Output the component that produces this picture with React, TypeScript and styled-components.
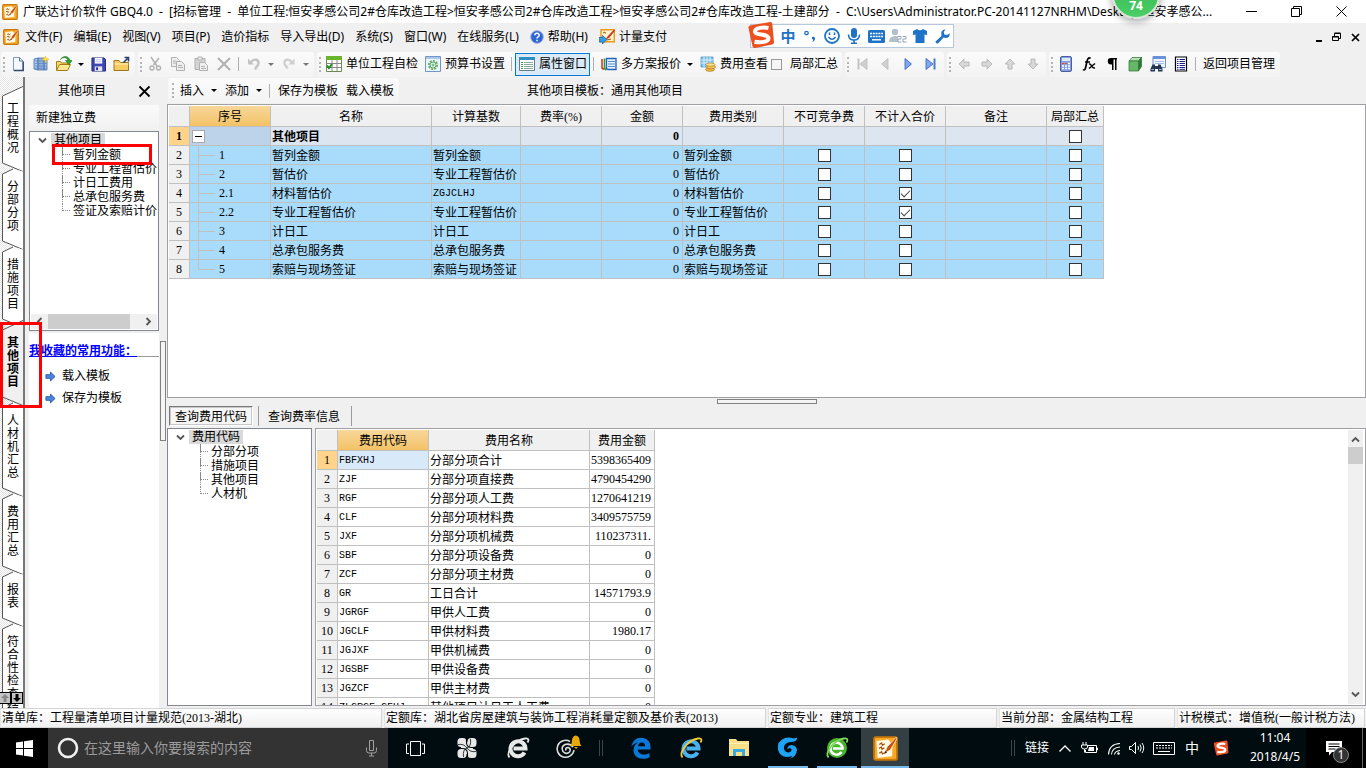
import React from "react";
import styled, { createGlobalStyle, css } from "styled-components";

const GlobalStyle = createGlobalStyle`
  *, *::before, *::after { box-sizing: border-box; }
  html, body { margin: 0; padding: 0; }
  body {
    font-family: "Noto Sans", "Noto Sans CJK SC", sans-serif;
    font-size: 12px;
    line-height: 16px;
    color: #000;
    background: #f0f0f0;
  }
  button, input { font: inherit; color: inherit; margin: 0; }
  button { border: 0; background: none; padding: 0; white-space: nowrap; }
  svg { display: block; flex: none; }
`;

const serif = `"Liberation Serif", "Noto Sans CJK SC", serif`;

const Screen = styled.div`
  position: relative;
  height: 100vh;
  display: flex;
  flex-direction: column;
  overflow: hidden;
  background: #f0f0f0;
`;

/* ---------- title and menu ---------- */
const TitleBar = styled.header`
  height: 23px;
  flex: none;
  display: flex;
  align-items: center;
  padding-left: 2px;
  background: #fff;
`;
const TitleText = styled.h1`
  margin: 0 0 0 5px;
  font-size: 12px;
  font-weight: 400;
  line-height: 22px;
  flex: 0 1 1206px;
  min-width: 0;
  overflow: hidden;
  text-overflow: ellipsis;
  white-space: pre;
`;
const TitleDash = styled.span`
  padding: 0 3px;
`;
const WindowButtons = styled.div`
  display: flex;
  margin-left: auto;
  padding-right: 2px;
`;
const WindowButton = styled.button`
  width: 45px;
  height: 22px;
  display: grid;
  place-items: center;
`;
const MenuBar = styled.nav`
  height: 28px;
  flex: none;
  display: flex;
  align-items: center;
  gap: 1px;
  padding-left: 3px;
`;
const MenuItem = styled.button`
  display: flex;
  align-items: center;
  gap: 4px;
  padding: 0 5px;
  height: 24px;
`;
const MdiButtons = styled.div`
  display: flex;
  margin-left: auto;
  padding-right: 2px;
`;
const MdiButton = styled.button`
  width: 18px;
  height: 20px;
  display: grid;
  place-items: center;
`;
const ImeBar = styled.div`
  position: absolute;
  top: 24px;
  left: 750px;
  height: 24px;
  width: 204px;
  display: flex;
  align-items: center;
  padding-left: 26px;
  background: #fff;
  border: 1px solid #b4c7dc;
`;
const ImeLogo = styled.span`
  position: absolute;
  left: -4px;
  top: -4px;
`;
const ImeButton = styled.button`
  width: 22px;
  height: 22px;
  display: grid;
  place-items: center;
  color: #1e73c8;
  font-size: 15px;
  font-weight: 700;
  line-height: 20px;
`;
const FloatBadge = styled.div`
  position: absolute;
  top: -29px;
  left: 1112px;
  width: 48px;
  height: 48px;
  border-radius: 50%;
  border: 2px solid #d8e4d8;
  background: linear-gradient(#2fae4c, #4bcf66);
  box-shadow: 0 2px 8px rgba(0, 0, 0, 0.4);
  color: #fff;
  font: 700 12px/16px "Open Sans", sans-serif;
  display: flex;
  align-items: flex-end;
  justify-content: center;
  padding-bottom: 3px;
`;

/* ---------- toolbars ---------- */
const ToolRow = styled.div`
  height: 26px;
  flex: none;
  display: flex;
  align-items: center;
  gap: 3px;
  padding-left: 1px;
`;
const ToolGroup = styled.div`
  height: 25px;
  display: flex;
  align-items: center;
  padding-right: 2px;
  border-radius: 3px;
  background: linear-gradient(#fbfbfb, #f3f3f3);
`;
const Grip = styled.span`
  width: 5px;
  height: 15px;
  border-left: 2px dotted #b4b4b4;
  margin-left: 2px;
  margin-right: -2px;
`;
const ToolButton = styled.button`
  width: 23px;
  height: 23px;
  display: grid;
  place-items: center;
`;
const TextTool = styled.button<{ $active?: boolean }>`
  height: 23px;
  display: flex;
  align-items: center;
  gap: 4px;
  padding: 0 3px 0 4px;
  ${(p) =>
    p.$active &&
    css`
      background: #dbeaf7;
      box-shadow: inset 0 0 0 1px #0078d7;
    `}
`;
const Drop = styled.button<{ $dim?: boolean }>`
  width: 12px;
  height: 22px;
  display: grid;
  place-items: center;
  &::before {
    content: "";
    border: 3px solid transparent;
    border-top-color: ${(p) => (p.$dim ? "#777" : "#000")};
    border-bottom: 0;
  }
`;
const Divider = styled.span`
  width: 1px;
  height: 14px;
  margin: 0 3px;
  background: #b0b0b0;
`;
const CheckLabel = styled.label`
  display: flex;
  align-items: center;
  gap: 8px;
  padding-right: 2px;
`;
const Tick = styled.input<{ $soft?: boolean }>`
  appearance: none;
  display: block;
  width: ${(p) => (p.$soft ? 11 : 13)}px;
  height: ${(p) => (p.$soft ? 11 : 13)}px;
  border: 1px solid ${(p) => (p.$soft ? "#999" : "#333")};
  background: ${(p) => (p.$soft ? "#f6f6f6" : "#fff")};
  &:checked::after {
    content: "";
    display: block;
    width: 9px;
    height: 5px;
    margin: 2px 1px;
    border: solid #444;
    border-width: 0 0 1px 1px;
    transform: rotate(-45deg);
  }
`;

/* ---------- workspace ---------- */
const Workspace = styled.div`
  position: relative;
  flex: 1;
  min-height: 0;
  display: flex;
`;
const SideTabs = styled.nav`
  width: 25px;
  flex: none;
  position: relative;
  overflow: hidden;
  padding-top: 19px;
  border-right: 2px solid #777;
  background: repeating-conic-gradient(#e4e4e4 0 25%, #fff 0 50%) 0 0 / 2px 2px;
`;
const SideTab = styled.button<{ $on?: boolean }>`
  position: relative;
  z-index: ${(p) => (p.$on ? 2 : 1)};
  display: block;
  width: 25px;
  padding: 6px 5px 20px 7px;
  line-height: 13px;
  white-space: normal;
  word-break: break-all;
  text-align: left;
  font-weight: ${(p) => (p.$on ? 700 : 400)};
  & > svg { position: absolute; left: 0; top: -11px; z-index: -1; }
`;
const TabScroll = styled.div`
  position: absolute;
  z-index: 3;
  left: -1px;
  bottom: 4px;
  display: flex;
`;
const TabScrollButton = styled.button`
  width: 12px;
  height: 12px;
  display: grid;
  place-items: center;
  border: 1px solid #000;
  background: #c4c4c4;
`;
const SidePanel = styled.aside`
  width: 130px;
  flex: none;
  margin-left: 4px;
  display: flex;
  flex-direction: column;
`;
const PanelTitle = styled.div`
  height: 28px;
  display: flex;
  align-items: center;
  justify-content: space-between;
  padding: 0 8px 0 29px;
`;
const PanelTool = styled.button`
  height: 24px;
  margin-bottom: 2px;
  padding: 1px 7px 0;
  text-align: left;
  border-radius: 2px;
  background: linear-gradient(#fafafa, #f2f2f2);
`;
const TreeBox = styled.div`
  display: flex;
  flex-direction: column;
  border: 1px solid #828790;
  background: #fff;
  overflow: hidden;
`;
const SideTree = styled(TreeBox)`
  height: 200px;
  padding: 1px;
`;
const BottomTree = styled(TreeBox)`
  width: 145px;
  flex: none;
  padding: 1px;
`;
const TreeRoot = styled.div`
  height: 14px;
  display: flex;
  align-items: center;
  gap: 4px;
  padding-left: 7px;
  line-height: 14px;
`;
const RootName = styled.span`
  padding: 0 3px;
  background: #d9d9d9;
`;
const TreeList = styled.ul`
  margin: 0 0 0 31px;
  padding: 0;
  list-style: none;
`;
const TreeItem = styled.li`
  height: 14px;
  line-height: 16px;
  display: flex;
  white-space: nowrap;
  &::before {
    content: "";
    flex: none;
    width: 8px;
    height: 8px;
    margin-right: 3px;
    border-left: 1px dotted #888;
    border-bottom: 1px dotted #888;
  }
  &:not(:last-child) {
    background: repeating-linear-gradient(#888 0 1px, transparent 1px 2px) 0 0 / 1px 14px no-repeat;
  }
`;
const HScroll = styled.div`
  height: 15px;
  margin-top: auto;
  display: flex;
  align-items: center;
  justify-content: space-between;
  padding: 0 4px;
  background: #f0f0f0;
`;
const HThumb = styled.div`
  width: 82px;
  height: 15px;
  margin-right: 10px;
  background: #cdcdcd;
`;
const Favorites = styled.section`
  flex: 1;
  margin-top: 2px;
  background: #fff;
`;
const FavTitle = styled.h2`
  margin: 0 0 8px;
  padding-top: 10px;
  height: 24px;
  font-size: 12px;
  line-height: 16px;
  font-weight: 700;
  color: #0000ff;
  white-space: nowrap;
  text-decoration: underline;
  border-bottom: 1px solid #999;
`;
const FavLink = styled.a`
  height: 22px;
  display: flex;
  align-items: center;
  gap: 6px;
  padding-left: 16px;
  color: #000;
  text-decoration: none;
`;
const VSplit = styled.div`
  width: 8px;
  flex: none;
  padding: 264px 1px 0;
  &::before {
    content: "";
    display: block;
    height: 100px;
    width: 6px;
    border: 1px solid #808080;
    background: #f4f4f4;
  }
`;
const Main = styled.main`
  flex: 1;
  min-width: 0;
  display: flex;
  flex-direction: column;
`;
const MainTools = styled.div`
  height: 27px;
  flex: none;
  display: flex;
  align-items: center;
  padding-left: 1px;
`;
const EditGroup = styled(ToolGroup)`
  gap: 1px;
  padding-left: 2px;
`;
const TemplateName = styled.span`
  margin-left: 128px;
`;
const SheetBox = styled.div`
  border: 1px solid #a0a0a4;
  background: #fff;
  padding: 1px;
  overflow: hidden;
  display: flex;
`;
const TopSheet = styled(SheetBox)`
  flex: 0 0 294px;
`;
const HSplit = styled.div`
  height: 6px;
  flex: none;
  display: flex;
  justify-content: center;
  padding: 1px 0 0;
  &::before {
    content: "";
    width: 100px;
    height: 5px;
    border: 1px solid #808080;
    background: #f4f4f4;
  }
`;
const QueryTabs = styled.div`
  height: 24px;
  flex: none;
  display: flex;
  align-items: center;
  padding-left: 2px;
`;
const QueryTab = styled.button<{ $on?: boolean }>`
  height: 20px;
  padding: 1px 5px 0;
  border: 1px solid transparent;
  ${(p) =>
    p.$on &&
    css`
      border-color: #777 #fff #fff #777;
      box-shadow: inset -1px -1px 0 #c8c8c8, inset 1px 1px 0 #c8c8c8;
      background: #f6f6f6;
    `}
`;
const QueryDivider = styled.span`
  width: 1px;
  height: 20px;
  margin: 0 3px 0 5px;
  background: #999;
`;
const BottomArea = styled.div`
  flex: 1;
  min-height: 0;
  display: flex;
  gap: 3px;
  padding-bottom: 2px;
`;
const CodeSheet = styled(SheetBox)`
  flex: 1;
  min-width: 0;
  justify-content: space-between;
`;
const VScroll = styled.div`
  width: 15px;
  margin-right: 1px;
  display: flex;
  flex-direction: column;
  align-items: center;
  padding: 5px 0;
  background: #f0f0f0;
`;
const VThumb = styled.div`
  width: 15px;
  height: 17px;
  margin-top: 3px;
  margin-bottom: auto;
  background: #cdcdcd;
`;

/* ---------- grids ---------- */
const Grid = styled.table`
  table-layout: fixed;
  border-collapse: separate;
  border-spacing: 0;
  align-self: flex-start;
  flex: none;
  font-family: ${serif};
`;
const Col = styled.col<{ $w: number }>`
  width: ${(p) => p.$w}px;
`;
const Head = styled.th<{ $hot?: boolean }>`
  height: 21px;
  padding: 2px 0 0;
  font-weight: 400;
  line-height: 18px;
  border: solid #c0c0c0;
  border-width: 0 1px 1px 0;
  white-space: nowrap;
  background: ${(p) => (p.$hot ? "linear-gradient(#f8d79b, #f3c266)" : "#f0f0f0")};
`;
const RowNo = styled.th<{ $hot?: boolean; $bold?: boolean }>`
  height: 19px;
  padding: 0;
  font-weight: ${(p) => (p.$bold ? 700 : 400)};
  line-height: 16px;
  border: solid #c0c0c0;
  border-width: 0 1px 1px 0;
  background: ${(p) => (p.$hot ? "#ffd48a" : "#f0f0f0")};
`;
const Cell = styled.td<{ $bg?: string; $bold?: boolean }>`
  height: 19px;
  padding: 2px 0 0 1px;
  line-height: 16px;
  white-space: nowrap;
  overflow: hidden;
  border: solid #c0c0c0;
  border-width: 0 1px 1px 0;
  background: ${(p) => p.$bg || "#fff"};
  font-weight: ${(p) => (p.$bold ? 700 : 400)};
`;
const NumberCell = styled(Cell)`
  padding: 0 3px 0 0;
  text-align: right;
`;
const TickCell = styled(Cell)`
  padding: 0;
  & > input { margin: 0 auto; }
`;
const SerialCell = styled(Cell)`
  padding: 0;
`;
const Serial = styled.div`
  height: 18px;
  display: flex;
  align-items: center;
`;
const Branch = styled.span<{ $last?: boolean }>`
  width: 17px;
  height: 18px;
  margin-left: 8px;
  margin-right: 4px;
  background:
    linear-gradient(#c0c0c0, #c0c0c0) 0 0 / 1px ${(p) => (p.$last ? "9px" : "18px")} no-repeat,
    linear-gradient(#c0c0c0, #c0c0c0) 0 9px / 17px 1px no-repeat;
`;
const Code = styled.span`
  display: block;
  font-family: "Liberation Mono", monospace;
  font-size: 10px;
  line-height: 16px;
`;
const Fold = styled.button`
  width: 13px;
  height: 13px;
  margin-left: 2px;
  display: grid;
  place-items: center;
  border: 1px solid #aaa;
  background: #fff;
  &::before {
    content: "";
    width: 7px;
    height: 1px;
    background: #000;
  }
`;

/* ---------- status bar ---------- */
const StatusBar = styled.footer`
  height: 20px;
  flex: none;
  display: grid;
  grid-template-columns: 382fr 382fr 229fr 176fr 188fr;
  gap: 2px;
  padding-right: 1px;
  font-family: ${serif};
`;
const StatusCell = styled.div`
  border: 1px solid #d4d4d4;
  border-left-color: #e4e4e4;
  background: linear-gradient(#fff, #f0f0f0);
  padding-left: 1px;
  line-height: 18px;
  white-space: nowrap;
  overflow: hidden;
`;

/* ---------- task bar ---------- */
const TaskBar = styled.div`
  height: 40px;
  flex: none;
  display: flex;
  background: #000c10;
  color: #fff;
`;
const StartButton = styled.button`
  width: 48px;
  display: grid;
  place-items: center;
  background: #000;
`;
const SearchBox = styled.label`
  width: 340px;
  display: flex;
  align-items: center;
  gap: 5px;
  padding: 0 9px;
  background: #333;
`;
const SearchInput = styled.input`
  flex: 1;
  min-width: 0;
  padding: 0;
  border: 0;
  background: none;
  font-size: 14px;
  line-height: 20px;
  color: #9b9b9b;
  &::placeholder { color: #9b9b9b; opacity: 1; }
`;
const Task = styled.button<{ $w: number; $run?: boolean; $on?: boolean }>`
  width: ${(p) => p.$w}px;
  display: grid;
  place-items: center;
  background-color: ${(p) => (p.$on ? "#333f43" : "transparent")};
  ${(p) =>
    p.$run &&
    css`
      background-image: linear-gradient(#76b9ed, #76b9ed);
      background-repeat: no-repeat;
      background-position: center bottom;
      background-size: ${p.$on ? "100%" : "40px"} 2px;
    `}
`;
const TrayBars = styled.span`
  width: 4px;
  height: 16px;
  align-self: center;
  border: solid #3c4648;
  border-width: 0 1px;
`;
const PinnedBars = styled(TrayBars)`
  margin: 0 13px 0 6px;
`;
const Tray = styled.div`
  margin-left: auto;
  display: flex;
  align-items: center;
`;
const TrayItem = styled.button<{ $w: number }>`
  width: ${(p) => p.$w}px;
  height: 40px;
  display: grid;
  place-items: center;
`;
const ImeMode = styled(TrayItem)`
  font-size: 14px;
`;
const Clock = styled.time`
  width: 62px;
  margin-left: 11px;
  text-align: center;
  line-height: 19px;
`;
const Notice = styled.button`
  position: relative;
  width: 56px;
  height: 40px;
  display: grid;
  place-items: center;
  background: #000;
`;
const NoticeCount = styled.span`
  position: absolute;
  left: 27px;
  top: 19px;
  width: 16px;
  height: 16px;
  border-radius: 50%;
  border: 1px solid #888;
  background: #333;
  line-height: 14px;
`;
const ShowDesktop = styled.button`
  width: 4px;
  height: 40px;
  background: #000;
  border-left: 1px solid #666;
`;

/* ---------- outlines drawn over the window ---------- */
const TreeMark = styled.div`
  position: absolute;
  left: 52px;
  top: 67px;
  width: 100px;
  height: 21px;
  border: 3px solid #f00;
`;
const TabMark = styled.div`
  position: absolute;
  z-index: 4;
  left: 0;
  top: 245px;
  width: 42px;
  height: 86px;
  border: 3px solid #f00;
`;

/* ---------- icons ---------- */
const AppIcon = ({ s = 16 }: { s?: number }) => (
  <svg width={s} height={s} viewBox="0 0 16 16">
    <rect x="0.7" y="0.7" width="14.6" height="14.6" rx="1" fill="#f9a825" stroke="#c8780a" strokeWidth="1.2" />
    <path d="M2.200 3.200l7.500-1 2.800 3.300-.3 7.500-9.200 1z" fill="#fffbe8" />
    <path d="M4 5.500l1.500-1 .5 1.500 1.500-1M3.800 8l1.500-1 .5 1.500 1.500-1M4 11l1.500-1 .5 1.500 2-1" stroke="#a5520c" strokeWidth=".8" fill="none" />
    <path d="M14.800.8L9 7l-1.500 3.800L11 9l4.300-7.200z" fill="#c4501a" stroke="#fff0c0" strokeWidth=".5" />
    <path d="M8 9.500l-.8 1.800L9 10.500z" fill="#3b1a08" />
  </svg>
);
const S16 = ({ children, w = 16, h = 16 }: { children: React.ReactNode; w?: number; h?: number }) => (
  <svg width={w} height={h} viewBox="0 0 16 16" fill="none">
    {children}
  </svg>
);
const NewIcon = () => (
  <S16>
    <path d="M3.500 1.500h6l3.500 3.500v9.500h-9.500z" fill="#f4f8ff" stroke="#7f9abf" />
    <path d="M9.500 1.500V5H13" stroke="#55759c" />
    <path d="M13.200 5.500v9H4" stroke="#2f4768" strokeWidth="1.400" />
  </S16>
);
const ProjectIcon = () => (
  <S16>
    <path d="M1 3l4-1v12l-4-1zM5 2h6v12H5zM11 4h3v10h-3z" fill="#a9c8ee" stroke="#4a6fa8" strokeWidth=".8" />
    <path d="M2 5h11M2 7.500h12M2 10h12M2 12.300h12M7 2v12M9 2v12" stroke="#5b83bd" strokeWidth=".7" />
    <path d="M12.500 0l.9 2.300L16 3.200l-2.600.9-.9 2.400-.9-2.400L9 3.200l2.600-.9z" fill="#ffe14a" stroke="#f0b800" strokeWidth=".5" />
  </S16>
);
const OpenIcon = () => (
  <S16>
    <path d="M.5 14V5.500h4l1 1.500H12v2" fill="#f6d873" stroke="#a87c14" />
    <path d="M.5 14.500l3-6h11l-3 6z" fill="#ffe894" stroke="#a87c14" />
    <path d="M4.500 3.500C7 .5 11 1 12 4.500h-2.500L13 8.500l3-4h-2C13 0 7-1 4.500 3.500z" fill="#2fa534" stroke="#157018" strokeWidth=".6" />
  </S16>
);
const SaveIcon = () => (
  <S16 w={15} h={15}>
    <path d="M1 1h13l1.500 1.500V15H1z" fill="#3b46ae" stroke="#1c2478" />
    <path d="M4 1h8v6H4z" fill="#fff" />
    <path d="M5 3h6M5 5h6" stroke="#b8bfe0" />
    <path d="M4 10h8v5H4z" fill="#dfe3f5" />
    <path d="M5.500 11h2v3h-2z" fill="#222c85" />
  </S16>
);
const FolderUpIcon = () => (
  <S16 w={17}>
    <path d="M.5 14.500V4.500h5l1.500 2h8v8z" fill="#f6cd62" stroke="#9d7420" />
    <path d="M1 8h14" stroke="#fff0ba" />
    <path d="M10 6.500L14 2.500M11 1.500h4v4" stroke="#27406e" strokeWidth="1.600" />
  </S16>
);
const gray = "#b0b0b0";
const CutIcon = () => (
  <S16>
    <path d="M4 1l6 9M12 2L6.500 9" stroke={gray} strokeWidth="1.500" />
    <circle cx="5" cy="12" r="2" stroke={gray} strokeWidth="1.300" />
    <circle cx="11.500" cy="12" r="2" stroke={gray} strokeWidth="1.300" />
  </S16>
);
const CopyIcon = () => (
  <S16>
    <path d="M1.500 1.500h5l3 3v6h-8z" fill="#eee" stroke={gray} />
    <path d="M6.500 5.500h5l3 3v6h-8z" fill="#eee" stroke={gray} />
    <path d="M8 9.500h4M8 11.500h5M3 5h3M3 7h3" stroke={gray} />
  </S16>
);
const PasteIcon = () => (
  <S16>
    <path d="M2 2.500h10v11H2z" fill="#d4d4d4" stroke={gray} />
    <path d="M5 1h4v3H5z" fill="#eee" stroke={gray} />
    <path d="M6.500 6.500h5l3 3v5h-8z" fill="#f0f0f0" stroke={gray} />
    <path d="M8 10.500h4M8 12.500h5" stroke={gray} />
  </S16>
);
const DeleteIcon = () => (
  <S16>
    <path d="M2 2l12 12M14 2L2 14" stroke={gray} strokeWidth="2" />
  </S16>
);
const UndoIcon = () => (
  <S16>
    <path d="M2 2.500v6h6z" fill="#c4c4c4" />
    <path d="M5 6C8 2 13 3.500 12.500 7.500c-.3 2.500-2.500 3-3.500 6" stroke="#c4c4c4" strokeWidth="2.400" />
  </S16>
);
const RedoIcon = () => (
  <S16>
    <path d="M13.500 2.500v6h-6z" fill="#cfcfcf" />
    <path d="M10.500 6C8 2 2.500 3.500 3.500 7.500c.4 2 2 2.500 3 5" stroke="#cfcfcf" strokeWidth="2.400" />
  </S16>
);
const CheckTableIcon = () => (
  <S16>
    <path d="M.5.500h15v15H.5z" fill="#fff" stroke="#6b8a52" />
    <path d="M0 0h16v4H0z" fill="#6bb52c" />
    <path d="M1 7.500h14M1 11.500h14M6 4v11M11 4v11" stroke="#888" />
    <path d="M1 9.500l2 2.500 3-4" stroke="#1f8a1f" strokeWidth="2" />
  </S16>
);
const BudgetIcon = () => (
  <S16>
    <path d="M.5.500h15v15H.5z" fill="#eef5fc" stroke="#6f96c5" />
    <path d="M1 1h14v2H1z" fill="#a9c6e8" />
    <circle cx="8" cy="9" r="4.200" stroke="#5cae62" strokeWidth="1.800" strokeDasharray="2 1.200" />
    <circle cx="8" cy="9" r="3" stroke="#5cae62" />
    <circle cx="8" cy="9" r="1" stroke="#5cae62" />
  </S16>
);
const PropsIcon = () => (
  <S16>
    <path d="M.5 1.500h15v13H.5z" fill="#fff" stroke="#6b7b8c" />
    <path d="M0 1h16v3H0z" fill="#2f8fc4" />
    <path d="M2 6.500h2M2 8.500h2M2 10.500h2M2 12.500h2" stroke="#3f9b4e" />
    <path d="M5 6.500h9M5 8.500h9M5 10.500h9M5 12.500h9" stroke="#8aa7a0" />
  </S16>
);
const PlansIcon = () => (
  <S16>
    <path d="M1 3v9l2 1.500" stroke="#d43c2a" strokeWidth="1.600" />
    <path d="M3.500 2.500v10l2 1.500" stroke="#2f9a3a" strokeWidth="1.600" />
    <path d="M5.500 2.500h9.500v11H7l-1.500-1z" fill="#e3f0ff" stroke="#2563b8" strokeWidth="1.300" />
    <path d="M7 5.500h7M7 8h7M7 10.500h7" stroke="#5a90d6" />
  </S16>
);
const FeeIcon = () => (
  <S16>
    <path d="M1 1h12v10H1z" fill="#7cc0e8" stroke="#4d9bc8" strokeWidth=".8" />
    <path d="M1 4h12M1 7h12M4 1v10M7 1v10M10 1v10" stroke="#d9f0fb" />
    <ellipse cx="10" cy="13.500" rx="4.500" ry="1.800" fill="#f2b541" stroke="#9c6a13" strokeWidth=".6" />
    <ellipse cx="11" cy="11" rx="4.500" ry="1.800" fill="#f7c85b" stroke="#9c6a13" strokeWidth=".6" />
    <ellipse cx="10.500" cy="8.600" rx="4.500" ry="1.700" fill="#ffdf8a" stroke="#9c6a13" strokeWidth=".6" />
  </S16>
);
const NavIcon = ({ bar, back, on }: { bar?: boolean; back?: boolean; on?: boolean }) => (
  <svg width="16" height="16" viewBox="0 0 16 16" fill={on ? "#7fa6ee" : "#cfcfcf"}>
    <g transform={back ? "matrix(-1 0 0 1 16 0)" : undefined}>
      <path d={bar ? "M3 2.500L10 8l-7 5.500z" : "M5 2.500L11.500 8 5 13.500z"} stroke={on ? "#2f5fc0" : "#bbb"} strokeWidth=".8" />
      {bar && <path d="M10.500 2.500h2v11h-2z" fill={on ? "#4a78d4" : "#c4c4c4"} />}
    </g>
  </svg>
);
const ArrowIcon = ({ turn, blue }: { turn: number; blue?: boolean }) => (
  <svg width={blue ? 11 : 12} height={blue ? 11 : 12} viewBox="0 0 12 12">
    <path
      d="M1 4h5V1.200L11 6l-5 4.800V8H1z"
      fill={blue ? "#4a86dc" : "#d8d8d8"}
      stroke={blue ? "#1f4fa8" : "#b4b4b4"}
      strokeWidth=".9"
      transform={`rotate(${turn} 6 6)`}
    />
  </svg>
);
const CalcIcon = () => (
  <S16>
    <rect x="2.500" y=".5" width="11" height="15" rx="1.500" fill="#7f9fe0" stroke="#4a5f9c" />
    <path d="M4 2h8v3H4z" fill="#dfeafc" />
    <path d="M4 7.500h8M4 10h8M4 12.500h8" stroke="#fff" strokeWidth="1.500" strokeDasharray="2 1" />
    <path d="M4 7.500h2M7 7.500h2" stroke="#e04a3c" strokeWidth="1.500" />
  </S16>
);
const BoxIcon = () => (
  <S16>
    <path d="M2 5l3-3.500h9.500L11.500 5z" fill="#b7e0b4" stroke="#2c6e34" strokeWidth=".7" />
    <path d="M11.500 5l3-3.500v9L11.500 15z" fill="#2c7a36" stroke="#2c6e34" strokeWidth=".7" />
    <path d="M2 5h9.500v10H2z" fill="#64b866" stroke="#2c6e34" strokeWidth=".7" />
  </S16>
);
const FindIcon = () => (
  <S16>
    <path d="M3 .5h12.500v11H3z" fill="#f0f5ff" stroke="#6b8fd0" />
    <path d="M3 .5h12.500V3H3z" fill="#6a92dc" />
    <path d="M5 5.500h9M5 7.500h9" stroke="#a7bfe8" />
    <path d="M2.500 8.500h2.500v1.500h3V8.500h2.500l2 4.500v2.500H8V13H5v2.500H.5V13z" fill="#26364e" />
    <path d="M1.500 13.500h2.500M9 13.500h2.500" stroke="#9fc0ee" />
  </S16>
);
const ListIcon = () => (
  <S16>
    <path d="M2.500 1h11v14h-11z" fill="#fff" stroke="#000" strokeWidth="1.200" />
    <path d="M4 3.500h1.500M4 5.500h1.500M4 7.500h1.500M4 9.500h1.500M4 11.500h1.500M4 13.300h1.500M6.500 3.500H12M6.500 5.500H12M6.500 7.500H12M6.500 9.500H12M6.500 11.500H12M6.500 13.300H12" stroke="#1a2288" />
  </S16>
);
const HelpIcon = () => (
  <svg width="14" height="14" viewBox="0 0 14 14">
    <circle cx="7" cy="7" r="6.400" fill="#2f67d2" stroke="#b0c0dc" />
    <path d="M4.800 5.300c.2-3 4.600-2.700 4.400 0C9 6.800 7 6.800 7 8.500M7 9.800v1.500" stroke="#fff" strokeWidth="1.500" fill="none" />
  </svg>
);
const PayIcon = () => (
  <S16>
    <path d="M2 .7h13.300v12H2z" fill="#fff2cf" stroke="#e89a1b" strokeWidth="1.400" />
    <path d="M4 4l2-1 .5 1.500M8 11l4-1" stroke="#a5520c" />
    <path d="M15 .5L8.500 7.500 6.500 10.500 10 9 15.800 2z" fill="#c8381e" />
    <path d="M0 8.500h3.500V6.500l4.500 4L3.500 15v-2H0z" fill="#3a9be0" stroke="#1b5f9c" strokeWidth=".7" />
  </S16>
);
const SogouS = ({ s }: { s: number }) => (
  <svg width={s} height={s} viewBox="0 0 28 28" fill="none">
    <path d="M3 4.500L23 1q2-.3 2.300 1.700L27 21q.2 2-1.800 2.500L8 27q-2 .3-2.500-1.700L1.500 7Q1.200 5 3 4.500z" fill="#ee4f1e" />
    <path d="M21.500 7C17 6 8 6.500 8 10.500c0 4 13 2 13.500 6.500.3 4-8 5-14 3.800" stroke="#fff" strokeWidth="4" />
  </svg>
);
const Chevron = ({ d }: { d: "l" | "r" | "u" | "d" }) => {
  const turn = { r: 0, d: 90, l: 180, u: 270 }[d];
  return (
    <svg width="9" height="9" viewBox="0 0 9 9" fill="none">
      <path d="M2.500 1L6 4.500 2.500 8" stroke="#555" strokeWidth="1.800" transform={`rotate(${turn} 4.500 4.500)`} />
    </svg>
  );
};
const TabShape = ({ h, on, first }: { h: number; on?: boolean; first?: boolean }) => (
  <svg width="25" height={h + 11} viewBox={`0 -11 25 ${h + 11}`}>
    <path
      d={`M25 ${first || on ? -10 : -2}L${first || on ? 23 : 13} ${first || on ? -10 : -5}L2.500 0V${h - 11}L24 ${h - 2}z`}
      fill={on ? "#f0f0f0" : "#fff"}
    />
    <path
      d={`M${first || on ? "24 -10" : "13 -5"}L2.500 0V${h - 11}L24 ${h - 2}`}
      fill="none"
      stroke="#555"
    />
  </svg>
);
const ELetter = ({ a, b, ring }: { a: string; b?: string; ring: string }) => (
  <svg width="26" height="24" viewBox="0 0 26 24" fill="none">
    {b && <circle cx="13" cy="12" r="10" fill={b} />}
    <path
      d={b ? "M17.500 16A6 6 0 1 1 18.500 12.500H9" : "M19.500 16.500A7.500 7.500 0 1 1 20.500 12.500H8.500"}
      stroke={a}
      strokeWidth={b ? 2.6 : 4}
    />
    <path d="M4.500 21.500C.5 17 9 4.500 20 2.500c4-.6 4 1.500 2.500 4" stroke={ring} strokeWidth="1.800" />
  </svg>
);

/* ---------- data ---------- */
const sideTabs = ["工程概况", "分部分项", "措施项目", "其他项目", "人材机汇总", "费用汇总", "报表", "符合性检查结果"];

const BLUE = "#a9dbfa";
const PALE = "#dde6f0";
const items: [string, string, string, boolean][] = [
  ["1", "暂列金额", "暂列金额", false],
  ["2", "暂估价", "专业工程暂估价", false],
  ["2.1", "材料暂估价", "ZGJCLHJ", true],
  ["2.2", "专业工程暂估价", "专业工程暂估价", true],
  ["3", "计日工", "计日工", false],
  ["4", "总承包服务费", "总承包服务费", false],
  ["5", "索赔与现场签证", "索赔与现场签证", false],
];
const codes: [string, string, string][] = [
  ["FBFXHJ", "分部分项合计", "5398365409"],
  ["ZJF", "分部分项直接费", "4790454290"],
  ["RGF", "分部分项人工费", "1270641219"],
  ["CLF", "分部分项材料费", "3409575759"],
  ["JXF", "分部分项机械费", "110237311."],
  ["SBF", "分部分项设备费", "0"],
  ["ZCF", "分部分项主材费", "0"],
  ["GR", "工日合计", "14571793.9"],
  ["JGRGF", "甲供人工费", "0"],
  ["JGCLF", "甲供材料费", "1980.17"],
  ["JGJXF", "甲供机械费", "0"],
  ["JGSBF", "甲供设备费", "0"],
  ["JGZCF", "甲供主材费", "0"],
  ["ZLGRGF_GFHJ", "其他项目计日工人工费", "0"],
];

const isAscii = (s: string) => /^[\x00-\x7f]+$/.test(s);

const FeeTable = () => (
  <Grid>
    <colgroup>
      {[21, 81, 161, 89, 81, 81, 101, 81, 81, 101, 57].map((w, i) => (
        <Col key={i} $w={w} />
      ))}
    </colgroup>
    <thead>
      <tr>
        <Head />
        {["序号", "名称", "计算基数", "费率(%)", "金额", "费用类别", "不可竞争费", "不计入合价", "备注", "局部汇总"].map((t, i) => (
          <Head key={t} $hot={i === 0}>{t}</Head>
        ))}
      </tr>
    </thead>
    <tbody>
      <tr>
        <RowNo $hot $bold>1</RowNo>
        <SerialCell $bg="#bdd3ea">
          <Serial><Fold aria-label="折叠" /></Serial>
        </SerialCell>
        <Cell $bg={PALE} $bold>其他项目</Cell>
        <Cell $bg={PALE} />
        <Cell $bg={PALE} />
        <NumberCell $bg={PALE} $bold>0</NumberCell>
        <Cell $bg={PALE} />
        <Cell $bg={PALE} />
        <Cell $bg={PALE} />
        <Cell $bg={PALE} />
        <TickCell $bg={PALE}><Tick type="checkbox" aria-label="局部汇总" /></TickCell>
      </tr>
      {items.map(([no, name, base, on], i) => (
        <tr key={no}>
          <RowNo>{i + 2}</RowNo>
          <SerialCell $bg={BLUE}>
            <Serial>
              <Branch $last={i === items.length - 1} />
              <span>{no}</span>
            </Serial>
          </SerialCell>
          <Cell $bg={BLUE}>{name}</Cell>
          <Cell $bg={BLUE}>{isAscii(base) ? <Code>{base}</Code> : base}</Cell>
          <Cell $bg={BLUE} />
          <NumberCell $bg={BLUE}>0</NumberCell>
          <Cell $bg={BLUE}>{name}</Cell>
          <TickCell $bg={BLUE}><Tick type="checkbox" aria-label="不可竞争费" /></TickCell>
          <TickCell $bg={BLUE}><Tick type="checkbox" aria-label="不计入合价" defaultChecked={on} /></TickCell>
          <Cell $bg={BLUE} />
          <TickCell $bg={BLUE}><Tick type="checkbox" aria-label="局部汇总" /></TickCell>
        </tr>
      ))}
    </tbody>
  </Grid>
);

const CodeTable = () => (
  <Grid>
    <colgroup>
      {[21, 91, 161, 65].map((w, i) => (
        <Col key={i} $w={w} />
      ))}
    </colgroup>
    <thead>
      <tr>
        <Head />
        <Head $hot>费用代码</Head>
        <Head>费用名称</Head>
        <Head>费用金额</Head>
      </tr>
    </thead>
    <tbody>
      {codes.map(([code, name, sum], i) => (
        <tr key={code}>
          <RowNo $hot={i === 0}>{i + 1}</RowNo>
          <Cell $bg={i === 0 ? "#d8eaf9" : "#fff"}><Code>{code}</Code></Cell>
          <Cell>{name}</Cell>
          <NumberCell>{sum}</NumberCell>
        </tr>
      ))}
    </tbody>
  </Grid>
);

export default function App() {
  return (
    <Screen>
      <GlobalStyle />
      <TitleBar>
        <AppIcon />
        <TitleText>
          广联达计价软件 GBQ4.0<TitleDash> - </TitleDash>[招标管理<TitleDash> - </TitleDash>单位工程:恒安孝感公司2#仓库改造工程&gt;恒安孝感公司2#仓库改造工程&gt;恒安孝感公司2#仓库改造工程-土建部分<TitleDash> - </TitleDash>C:\Users\Administrator.PC-20141127NRHM\Desktop\恒安孝感公...
        </TitleText>
        <WindowButtons>
          <WindowButton aria-label="最小化">
            <svg width="11" height="11" viewBox="0 0 11 11"><path d="M0 5.500h11" stroke="#000" /></svg>
          </WindowButton>
          <WindowButton aria-label="还原">
            <svg width="11" height="11" viewBox="0 0 11 11" fill="none" stroke="#000"><path d="M.5 2.500h8v8h-8zM2.500 2.500v-2h8v8h-2" /></svg>
          </WindowButton>
          <WindowButton aria-label="关闭">
            <svg width="11" height="11" viewBox="0 0 11 11"><path d="M.5.500l10 10M10.500.500l-10 10" stroke="#000" /></svg>
          </WindowButton>
        </WindowButtons>
      </TitleBar>

      <MenuBar>
        <AppIcon />
        {["文件(F)", "编辑(E)", "视图(V)", "项目(P)", "造价指标", "导入导出(D)", "系统(S)", "窗口(W)", "在线服务(L)"].map((m) => (
          <MenuItem key={m}>{m}</MenuItem>
        ))}
        <MenuItem><HelpIcon />帮助(H)</MenuItem>
        <MenuItem><PayIcon />计量支付</MenuItem>
        <MdiButtons>
          <MdiButton aria-label="最小化子窗口">
            <svg width="8" height="9" viewBox="0 0 8 9"><path d="M1 8h6" stroke="#000" strokeWidth="2" /></svg>
          </MdiButton>
          <MdiButton aria-label="还原子窗口">
            <svg width="10" height="10" viewBox="0 0 10 10" fill="none" stroke="#000"><path d="M.5 4.500h6v4h-6zM.5 5h6M2.500 4V1.500h6v5h-2M2.500 1h6" /></svg>
          </MdiButton>
          <MdiButton aria-label="关闭子窗口">
            <svg width="9" height="9" viewBox="0 0 9 9"><path d="M1 1l7 7M8 1L1 8" stroke="#000" strokeWidth="1.700" /></svg>
          </MdiButton>
        </MdiButtons>
      </MenuBar>

      <ToolRow>
        <ToolGroup>
          <Grip />
          <ToolButton aria-label="新建"><NewIcon /></ToolButton>
          <ToolButton aria-label="新建项目"><ProjectIcon /></ToolButton>
          <ToolButton aria-label="打开"><OpenIcon /></ToolButton>
          <Drop aria-label="打开选项" />
          <ToolButton aria-label="保存"><SaveIcon /></ToolButton>
          <ToolButton aria-label="文件夹"><FolderUpIcon /></ToolButton>
        </ToolGroup>
        <ToolGroup>
          <Grip />
          <ToolButton aria-label="剪切"><CutIcon /></ToolButton>
          <ToolButton aria-label="复制"><CopyIcon /></ToolButton>
          <ToolButton aria-label="粘贴"><PasteIcon /></ToolButton>
          <ToolButton aria-label="删除"><DeleteIcon /></ToolButton>
          <Divider />
          <ToolButton aria-label="撤销"><UndoIcon /></ToolButton>
          <Drop $dim aria-label="撤销列表" />
          <ToolButton aria-label="恢复"><RedoIcon /></ToolButton>
          <Drop $dim aria-label="恢复列表" />
        </ToolGroup>
        <ToolGroup>
          <Grip />
          <TextTool><CheckTableIcon />单位工程自检</TextTool>
          <TextTool><BudgetIcon />预算书设置</TextTool>
          <Divider />
          <TextTool $active><PropsIcon />属性窗口</TextTool>
          <Divider />
          <TextTool><PlansIcon />多方案报价</TextTool>
          <Drop aria-label="多方案报价选项" />
          <TextTool><FeeIcon />费用查看</TextTool>
          <CheckLabel><Tick $soft type="checkbox" />局部汇总</CheckLabel>
        </ToolGroup>
        <ToolGroup>
          <Grip />
          <ToolButton aria-label="第一条"><NavIcon bar back /></ToolButton>
          <ToolButton aria-label="上一条"><NavIcon back /></ToolButton>
          <ToolButton aria-label="下一条"><NavIcon on /></ToolButton>
          <ToolButton aria-label="最后一条"><NavIcon bar on /></ToolButton>
        </ToolGroup>
        <ToolGroup>
          <Grip />
          <ToolButton aria-label="左移"><ArrowIcon turn={180} /></ToolButton>
          <ToolButton aria-label="右移"><ArrowIcon turn={0} /></ToolButton>
          <ToolButton aria-label="上移"><ArrowIcon turn={270} /></ToolButton>
          <ToolButton aria-label="下移"><ArrowIcon turn={90} /></ToolButton>
        </ToolGroup>
        <ToolGroup>
          <Grip />
          <ToolButton aria-label="计算器"><CalcIcon /></ToolButton>
          <ToolButton aria-label="函数">
            <S16>
              <path d="M9.500 2.500C7.500 1 6.500 3 6 5.500L4.500 12c-.5 2-1.500 2.500-2.500 1.500M4 6h5" stroke="#000" strokeWidth="1.700" />
              <path d="M8 8c3-1 2 5 6 4M14 7.500L8 12.500" stroke="#000" strokeWidth="1.500" />
            </S16>
          </ToolButton>
          <ToolButton aria-label="段落">
            <S16><path d="M13 2H7a3.200 3.200 0 0 0 0 6.500h1V14h1.500V3.500h1.500V14h1.500V3.500h.5z" fill="#000" /></S16>
          </ToolButton>
          <ToolButton aria-label="图元"><BoxIcon /></ToolButton>
          <ToolButton aria-label="查找"><FindIcon /></ToolButton>
          <ToolButton aria-label="列表"><ListIcon /></ToolButton>
          <Divider />
          <TextTool>返回项目管理</TextTool>
        </ToolGroup>
      </ToolRow>

      <Workspace>
        <SideTabs>
          {sideTabs.map((t, i) => (
            <SideTab key={t} $on={i === 3}>
              <TabShape h={t.length * 13 + 26} on={i === 3} first={i === 0} />
              {t}
            </SideTab>
          ))}
          <TabScroll>
            <TabScrollButton aria-label="上一页签">
              <svg width="8" height="8" viewBox="0 0 8 8"><path d="M4 0l4 4H5.500v4h-3V4H0z" fill="#888" /></svg>
            </TabScrollButton>
            <TabScrollButton aria-label="下一页签">
              <svg width="8" height="8" viewBox="0 0 8 8"><path d="M4 8L0 4h2.500V0h3v4H8z" fill="#000" /></svg>
            </TabScrollButton>
          </TabScroll>
        </SideTabs>

        <SidePanel>
          <PanelTitle>
            其他项目
            <button aria-label="关闭面板">
              <svg width="13" height="13" viewBox="0 0 13 13"><path d="M1.500 1.500l10 10M11.500 1.500l-10 10" stroke="#000" strokeWidth="1.800" /></svg>
            </button>
          </PanelTitle>
          <PanelTool>新建独立费</PanelTool>
          <SideTree>
            <TreeRoot><Chevron d="d" /><RootName>其他项目</RootName></TreeRoot>
            <TreeList>
              {["暂列金额", "专业工程暂估价", "计日工费用", "总承包服务费", "签证及索赔计价"].map((t) => (
                <TreeItem key={t}>{t}</TreeItem>
              ))}
            </TreeList>
            <HScroll><Chevron d="l" /><HThumb /><Chevron d="r" /></HScroll>
          </SideTree>
          <Favorites>
            <FavTitle>我收藏的常用功能：</FavTitle>
            <FavLink href="#load"><ArrowIcon turn={0} blue />载入模板</FavLink>
            <FavLink href="#save"><ArrowIcon turn={0} blue />保存为模板</FavLink>
          </Favorites>
        </SidePanel>
        <VSplit />

        <Main>
          <MainTools>
            <EditGroup>
              <Grip />
              <TextTool>插入</TextTool>
              <Drop aria-label="插入选项" />
              <TextTool>添加</TextTool>
              <Drop aria-label="添加选项" />
              <Divider />
              <TextTool>保存为模板</TextTool>
              <TextTool>载入模板</TextTool>
            </EditGroup>
            <TemplateName>其他项目模板：通用其他项目</TemplateName>
          </MainTools>
          <TopSheet><FeeTable /></TopSheet>
          <HSplit />
          <QueryTabs>
            <QueryTab $on>查询费用代码</QueryTab>
            <QueryDivider />
            <QueryTab>查询费率信息</QueryTab>
            <QueryDivider />
          </QueryTabs>
          <BottomArea>
            <BottomTree>
              <TreeRoot><Chevron d="d" /><RootName>费用代码</RootName></TreeRoot>
              <TreeList>
                {["分部分项", "措施项目", "其他项目", "人材机"].map((t) => (
                  <TreeItem key={t}>{t}</TreeItem>
                ))}
              </TreeList>
            </BottomTree>
            <CodeSheet>
              <CodeTable />
              <VScroll><Chevron d="u" /><VThumb /><Chevron d="d" /></VScroll>
            </CodeSheet>
          </BottomArea>
        </Main>
        <TreeMark />
        <TabMark />
      </Workspace>

      <StatusBar>
        <StatusCell>清单库：工程量清单项目计量规范(2013-湖北)</StatusCell>
        <StatusCell>定额库：湖北省房屋建筑与装饰工程消耗量定额及基价表(2013)</StatusCell>
        <StatusCell>定额专业：建筑工程</StatusCell>
        <StatusCell>当前分部：金属结构工程</StatusCell>
        <StatusCell>计税模式：增值税(一般计税方法)</StatusCell>
      </StatusBar>

      <TaskBar>
        <StartButton aria-label="开始">
          <svg width="17" height="17" viewBox="0 0 17 17" fill="#fff"><path d="M0 2.500l7-1V8H0zM8 1.300L17 0v8H8zM0 9h7v6.500l-7-1zM8 9h9v8l-9-1.300z" /></svg>
        </StartButton>
        <SearchBox>
          <svg width="22" height="22" viewBox="0 0 22 22"><circle cx="11" cy="11" r="9" fill="none" stroke="#f0f0f0" strokeWidth="2.600" /></svg>
          <SearchInput type="text" aria-label="搜索" placeholder="在这里输入你要搜索的内容" />
          <svg width="14" height="17" viewBox="0 0 14 17" fill="none" stroke="#a0a0a0"><path d="M4.500.500h4v10h-4zM1.500 7.500v3q0 2.500 2.500 2.500h5q2.500 0 2.500-2.500v-3M6.500 13v3M4 16h5" /></svg>
        </SearchBox>
        <Task $w={55} aria-label="任务视图">
          <svg width="20" height="15" viewBox="0 0 20 15" fill="none" stroke="#fff"><path d="M4.500.500h10v14h-10zM3 3H.5v9.500H3M16 3h2.500v9.500H16" /></svg>
        </Task>
        <Task $w={47} aria-label="应用">
          <svg width="22" height="22" viewBox="0 0 22 22" fill="#e8e8e8">
            <rect x="1.500" y="1" width="9" height="9" rx="3.500" />
            <rect x="11.500" y="1" width="9" height="9" rx="3.500" />
            <rect x="1.500" y="12" width="9" height="9" rx="3.500" />
            <rect x="11.500" y="12" width="9" height="9" rx="3.500" />
            <path d="M5 5h12v12H5z" />
            <path d="M10.500 0v6q.5 4.500 5 4.500h6M11.500 22v-6q-.5-4.500-5-4.500h-6" fill="none" stroke="#000c10" strokeWidth="1.100" />
            <path d="M2 7.500q6-1 9 3.500-4.500 1.500-3.500 9M20 14.500q-6 1-9-3.500 4.500-1.500 3.500-9" fill="none" stroke="#000c10" strokeWidth=".8" />
          </svg>
        </Task>
        <Task $w={55} aria-label="浏览器"><ELetter a="#e8e8e8" ring="#e8e8e8" /></Task>
        <Task $w={48} aria-label="提醒">
          <svg width="28" height="28" viewBox="0 0 28 28" fill="none">
            <path d="M15 7.500A8.500 8.500 0 1 0 19 16M11 16.500q-1-3 2-3 3.500 1 1.500 4.500-3 3-6.500-.5Q5.500 13 10 10.500q5-1.500 8 2.500" stroke="#ddd" strokeWidth="1.600" />
            <path d="M15 12q2-2 2-6Q17.500 2 20.500 1.500q4 .5 4 4.500.2 4 2 6zM19 13h4l-2 2z" fill="#e8a80c" />
          </svg>
        </Task>
        <PinnedBars />
        <Task $w={50} aria-label="Edge">
          <svg width="22" height="22" viewBox="0 0 22 22">
            <path
              d="M1.500 9.500C2.500 4 6 .8 11 .8c6 0 9.500 4 9.500 9v2.700H7.800c.2 3.500 3 5 6.200 5 2.200 0 4-.5 5.500-1.500v4.200c-2 1-4 1.500-6.500 1.500-5.500 0-9.500-3-9.500-8.700 0-3.200 1.700-6 4.500-7.500C5 6 3 7.500 1.500 9.500zM8 9.200h7.200c0-2.500-1.300-3.700-3.400-3.700S8.300 7 8 9.200z"
              fill="#0a78d6"
              fillRule="evenodd"
            />
          </svg>
        </Task>
        <Task $w={49} aria-label="Internet Explorer"><ELetter a="#4ab0ee" ring="#f7ca2e" /></Task>
        <Task $w={48} aria-label="文件资源管理器">
          <svg width="22" height="20" viewBox="0 0 22 20"><path d="M1 1h7l1.500 2H21v15H1z" fill="#fbdf86" /><path d="M1 5h20v1H1z" fill="#fff1b8" /><path d="M5 18v-7h12v7h-3v-4H8v4z" fill="#38a8e0" /></svg>
        </Task>
        <Task $w={49} $run aria-label="浏览器二">
          <svg width="26" height="26" viewBox="0 0 26 26" fill="none">
            <path d="M22.500 2.500Q21.500 7 16 7 12.500 6.500 10 9.500q-2.500 4 .5 7 4 2.500 6-1 .5-2-1.500-2.500-2 0-2.500 1.500-.5-4 4-4.500 5 .5 5.500 5Q21.500 22 14 24q3-1.500 3.500-3Q6 24.500 3 15 1.500 6 10 3q4-1 7 0 3.500.8 5.500-.5z" fill="#1fa2f4" />
          </svg>
        </Task>
        <Task $w={49} $run aria-label="安全浏览器"><ELetter a="#fff" b="#49b52c" ring="#7fd858" /></Task>
        <Task $w={48} $run $on aria-label="广联达计价软件"><AppIcon s={25} /></Task>
        <Tray>
          <TrayBars />
          <TrayItem $w={44}>链接</TrayItem>
          <TrayItem $w={12} aria-label="显示隐藏的图标">
            <svg width="12" height="7" viewBox="0 0 12 7" fill="none" stroke="#fff" strokeWidth="1.300"><path d="M.5 6.500L6 1l5.500 5.500" /></svg>
          </TrayItem>
          <TrayItem $w={36} aria-label="电池">
            <svg width="17" height="12" viewBox="0 0 17 12" fill="none" stroke="#fff"><path d="M6 3.500h9.500v7H4.500V8M15.500 6h1v2h-1M2 0v3M5 0v3M.5 3h6v2q0 2-3 2t-3-2zM3.500 7v3.500" /><path d="M8 5h5v4H7z" fill="#fff" stroke="none" /></svg>
          </TrayItem>
          <TrayItem $w={14} aria-label="网络">
            <svg width="14" height="13" viewBox="0 0 14 13" fill="none" stroke="#fff"><path d="M1.500 12.500Q2 2 13 1.500M4.500 12.500Q5 5.500 13 5M7.500 12.500Q8 9 13 8.500" strokeWidth="1.100" /><circle cx="11.500" cy="11.500" r="1.200" fill="#fff" stroke="none" /></svg>
          </TrayItem>
          <TrayItem $w={32} aria-label="音量">
            <svg width="16" height="12" viewBox="0 0 16 12" fill="none" stroke="#fff"><path d="M.5 4.500h2l4-4v11l-4-4h-2zM9 4q1 2 0 4M11 2.500q2.500 3.500 0 7M13 1q3.500 5 0 10" /></svg>
          </TrayItem>
          <TrayItem $w={22} aria-label="键盘">
            <svg width="22" height="13" viewBox="0 0 22 13" fill="none" stroke="#fff"><path d="M.5.500h21v12H.5z" /><path d="M3 3.500h16M3 6h16" strokeDasharray="2 1" /><path d="M5 9.500h12" /></svg>
          </TrayItem>
          <ImeMode $w={34}>中</ImeMode>
          <TrayItem $w={24} aria-label="搜狗输入法"><SogouS s={16} /></TrayItem>
        </Tray>
        <Clock>11:04<br />2018/4/5</Clock>
        <Notice aria-label="通知">
          <svg width="18" height="17" viewBox="0 0 18 17"><path d="M1 1h16v11H7l-3 3.500V12H1z" fill="#fff" /><path d="M3.500 4h11M3.500 6.500h11M3.500 9h7" stroke="#000" /></svg>
          <NoticeCount>1</NoticeCount>
        </Notice>
        <ShowDesktop aria-label="显示桌面" />
      </TaskBar>

      <ImeBar>
        <ImeLogo><SogouS s={28} /></ImeLogo>
        <ImeButton>中</ImeButton>
        <ImeButton aria-label="标点">
          <svg width="14" height="14" viewBox="0 0 14 14" fill="none"><circle cx="3.500" cy="4" r="1.700" stroke="#1e73c8" strokeWidth="1.300" /><path d="M9 8q3-1 3 1.500T9 13q1.500-1.500 1-2.500-1.500-.5-1-2.500z" fill="#1e73c8" /></svg>
        </ImeButton>
        <ImeButton aria-label="表情">
          <svg width="16" height="16" viewBox="0 0 16 16" fill="none" stroke="#1e73c8"><circle cx="8" cy="8" r="7" strokeWidth="1.800" /><path d="M4.500 9q3.500 4.500 7 0" strokeWidth="1.500" /><path d="M5.500 4.500v2.500M10.500 4.500v2.500" strokeWidth="1.600" /></svg>
        </ImeButton>
        <ImeButton aria-label="语音">
          <svg width="14" height="16" viewBox="0 0 14 16" fill="none" stroke="#1e73c8"><rect x="4" y="0" width="6" height="10" rx="3" fill="#1e73c8" stroke="none" /><path d="M1.500 6.500Q1.500 12 7 12t5.500-5.500M7 12v3.500M4 15.300h6" strokeWidth="1.600" /></svg>
        </ImeButton>
        <ImeButton aria-label="软键盘">
          <svg width="17" height="13" viewBox="0 0 17 13" fill="none"><rect x="0" y="0" width="17" height="13" rx="1.500" fill="#1e73c8" /><path d="M2 3.500h13M2 6.500h13" stroke="#fff" strokeWidth="1.400" strokeDasharray="2 .8" /><path d="M4 9.800h9" stroke="#fff" strokeWidth="1.400" /></svg>
        </ImeButton>
        <ImeButton aria-label="账号">
          <svg width="18" height="16" viewBox="0 0 18 16" fill="#b4bfcc"><circle cx="6" cy="4" r="3.200" /><path d="M0 14q0-6 6-6 2 0 3 .8V14z" /><path d="M8.500 8.500h3.500v2.500H9V14h3.500M13.500 8.500H17v2.500h-3V14h3.500" fill="none" stroke="#93a3b5" /></svg>
        </ImeButton>
        <ImeButton aria-label="皮肤">
          <svg width="14" height="14" viewBox="0 0 14 14" fill="#1e73c8"><path d="M4 0q3 2.500 6 0l4 2v4l-2.500-.5V14h-9V5.500L0 6V2z" /></svg>
        </ImeButton>
        <ImeButton aria-label="工具箱">
          <svg width="15" height="15" viewBox="0 0 15 15" fill="#1e73c8"><path d="M10.500.3L8.800 3l.5 2.500 2.700.5L14.700 4.300Q15 9 10.500 9L8.500 8.500 3 14.500Q.5 15 .5 12.500L6.500 7Q5 1 10.500.3z" /></svg>
        </ImeButton>
      </ImeBar>
      <FloatBadge>74</FloatBadge>
    </Screen>
  );
}
